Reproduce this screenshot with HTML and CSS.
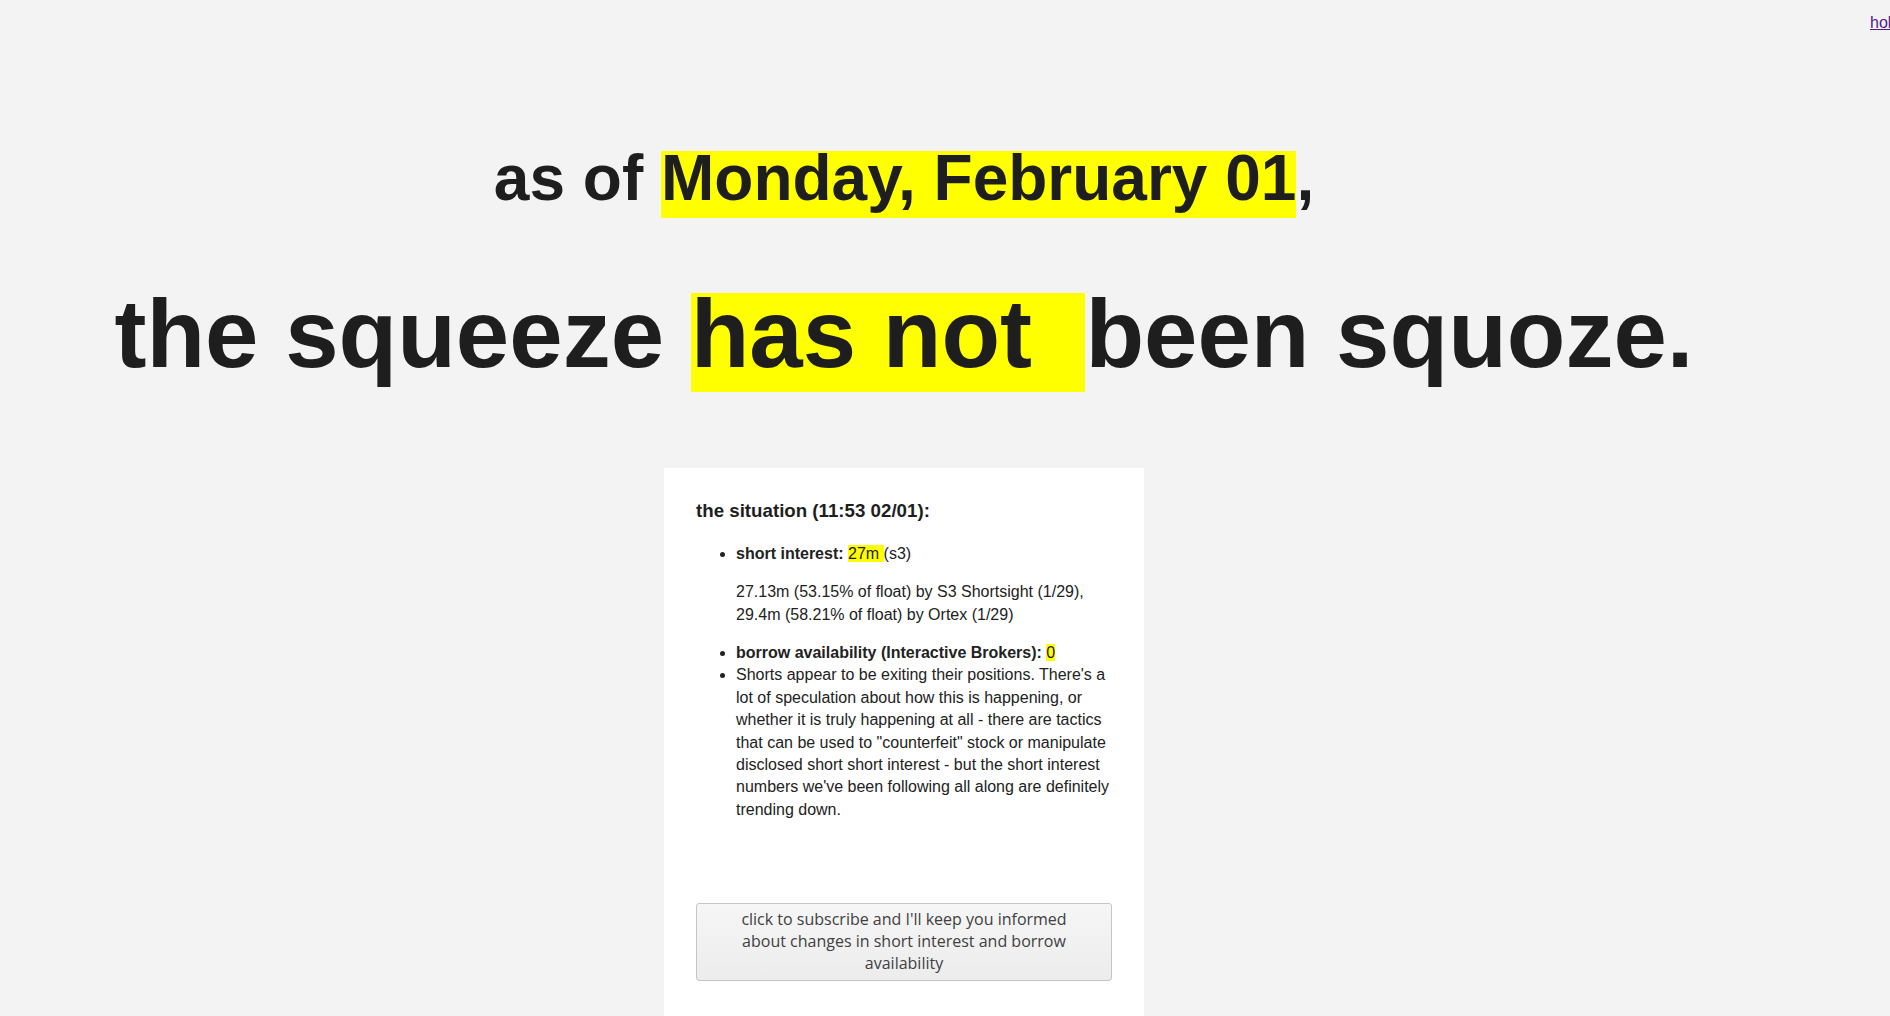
FILE: index.html
```html
<!DOCTYPE html>
<html lang="en">
<head>
<meta charset="utf-8">
<title>has the squeeze been squoze?</title>
<link rel="stylesheet" href="styles.css">
</head>
<body>
<div class="page">
  <main class="main">
    <h1 class="date-line">as of <span class="mark">Monday, February 01</span>,</h1>
    <h1 class="verdict">the squeeze <span class="mark">has not&nbsp; </span>been squoze.</h1>
    <section class="card">
      <h3 class="card-title">the situation (11:53 02/01):</h3>
      <ul class="facts">
        <li><strong>short interest:</strong> <span class="hl">27m </span>(s3)
          <p class="detail">27.13m (53.15% of float) by S3 Shortsight (1/29),<br>29.4m (58.21% of float) by Ortex (1/29)</p>
        </li>
        <li><strong>borrow availability (Interactive Brokers):</strong> <span class="hl">0</span></li>
        <li>Shorts appear to be exiting their positions. There's a lot of speculation about how this is happening, or whether it is truly happening at all - there are tactics that can be used to "counterfeit" stock or manipulate disclosed short short interest - but the short interest numbers we've been following all along are definitely trending down.</li>
      </ul>
      <div class="subscribe">
        <button class="subscribe-btn" type="button">click to subscribe and I'll keep you informed about changes in short interest and borrow availability</button>
      </div>
    </section>
  </main>
  <aside class="aside"><a class="corner-link" href="#">hold</a></aside>
</div>
</body>
</html>
```

FILE: styles.css
```css
html {
  overflow: hidden;
}

body {
  margin: 0;
  background: #f3f3f3;
  color: #1e1e1e;
  font-family: "Liberation Sans", Arial, sans-serif;
}

.page {
  display: flex;
  padding: 0 8px;
}

.main {
  flex: 0 0 1792px;
  min-width: 0;
  text-align: center;
}

.aside {
  flex: 0 0 82px;
  box-sizing: border-box;
  padding: 14px 0 0 70px;
  white-space: nowrap;
  font-size: 16px;
}

.corner-link {
  color: #551a8b;
  text-decoration: underline;
}

.date-line {
  margin: 140px 0 0;
  font-size: 64px;
  line-height: 1.2;
  font-weight: bold;
  white-space: nowrap;
}

.verdict {
  margin: 59px 0 0;
  font-size: 96px;
  line-height: 1.2;
  font-weight: bold;
  white-space: nowrap;
}

.mark {
  background: linear-gradient(to bottom, transparent 0.135em, #ffff00 0.135em);
  padding-bottom: 0.055em;
}

.card {
  width: 480px;
  box-sizing: border-box;
  margin: 77px auto 0;
  padding: 30px 32px 60px;
  background: #ffffff;
  text-align: left;
  color: #222222;
  font-size: 16px;
  line-height: 1.4;
}

.card-title {
  margin: 0 0 18.72px;
  font-size: 18.72px;
  font-weight: bold;
  color: #1e1e1e;
}

.facts {
  margin: 0;
  padding-left: 40px;
}

.detail {
  margin: 16px 0;
}

.hl {
  background: #ffff00;
}

.subscribe {
  margin-top: 82px;
}

.subscribe-btn {
  display: block;
  width: 100%;
  box-sizing: border-box;
  margin: 0;
  padding: 5px 30px;
  border: 1px solid #c5c5c5;
  border-radius: 3px;
  background: linear-gradient(to bottom, #f6f6f6, #ececec);
  color: #404040;
  font-family: "Open Sans", sans-serif;
  font-size: 16px;
  line-height: 1.362;
  text-align: center;
}
```
